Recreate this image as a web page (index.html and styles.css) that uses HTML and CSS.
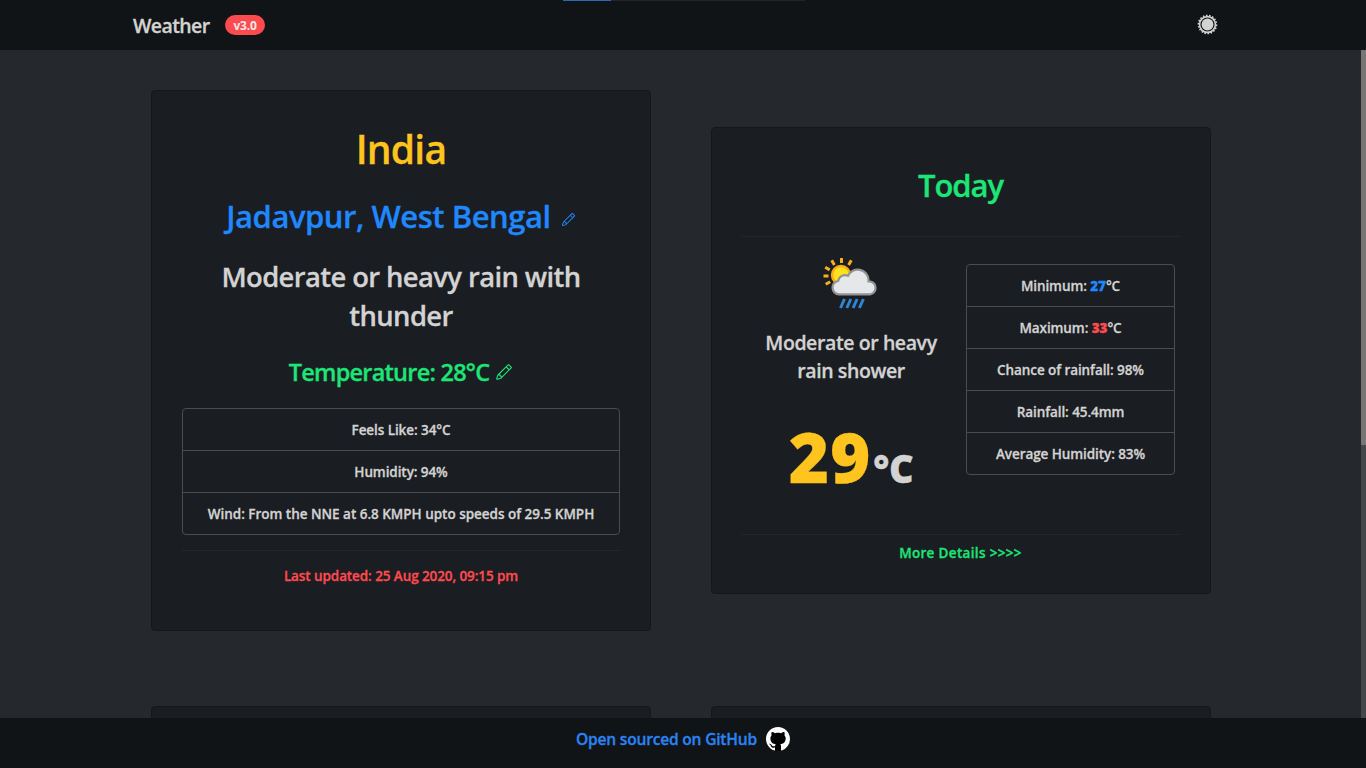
FILE: index.html
```html
<!DOCTYPE html>
<html lang="en">
<head>
<meta charset="utf-8">
<title>Weather</title>
<link rel="stylesheet" href="styles.css">
</head>
<body>
<div class="app">
  <header class="navbar">
    <div class="brand"><span class="brand-name">Weather</span><span class="badge">v3.0</span></div>
    <svg class="sun" viewBox="0 0 22 22" aria-label="Theme">
      <circle cx="11" cy="11" r="6.200" fill="currentColor"/>
      <circle cx="11" cy="11" r="8.300" fill="none" stroke="currentColor" stroke-width="1.700"/>
      <circle cx="11" cy="11" r="9.500" fill="none" stroke="currentColor" stroke-width="1.600" pathLength="36" stroke-dasharray="1 1"/>
    </svg>
    <div class="loader"><div class="loader-bar"></div></div>
  </header>

  <main class="content">
    <div class="cards">
      <section class="card current">
        <h1 class="country">India</h1>
        <h2 class="place"><span class="place-name">Jadavpur, West Bengal</span>
          <svg class="pencil pencil-sm" viewBox="0 0 16 16" fill="currentColor" fill-rule="evenodd"><path d="M11.293 1.293a1 1 0 0 1 1.414 0l2 2a1 1 0 0 1 0 1.414l-9 9a1 1 0 0 1-.39.242l-3 1a1 1 0 0 1-1.266-1.265l1-3a1 1 0 0 1 .242-.391l9-9zM12 2l2 2-9 9-3 1 1-3 9-9z"/><path d="M12.146 6.354l-2.5-2.5.708-.708 2.5 2.5-.707.708zM3 10v.5a.5.5 0 0 0 .5.5H4v.5a.5.5 0 0 0 .5.5H5v.5a.5.5 0 0 0 .5.5H6v-1.5a.5.5 0 0 0-.5-.5H5v-.5a.5.5 0 0 0-.5-.5H3z"/></svg></h2>
        <h3 class="condition">Moderate or heavy rain with<br>thunder</h3>
        <h4 class="temp"><span>Temperature: 28°C</span>
          <svg class="pencil" viewBox="0 0 16 16" fill="currentColor" fill-rule="evenodd"><path d="M11.293 1.293a1 1 0 0 1 1.414 0l2 2a1 1 0 0 1 0 1.414l-9 9a1 1 0 0 1-.39.242l-3 1a1 1 0 0 1-1.266-1.265l1-3a1 1 0 0 1 .242-.391l9-9zM12 2l2 2-9 9-3 1 1-3 9-9z"/><path d="M12.146 6.354l-2.5-2.5.708-.708 2.5 2.5-.707.708zM3 10v.5a.5.5 0 0 0 .5.5H4v.5a.5.5 0 0 0 .5.5H5v.5a.5.5 0 0 0 .5.5H6v-1.5a.5.5 0 0 0-.5-.5H5v-.5a.5.5 0 0 0-.5-.5H3z"/></svg></h4>
        <ul class="list">
          <li>Feels Like: 34°C</li>
          <li>Humidity: 94%</li>
          <li class="wind">Wind: From the NNE at 6.8 KMPH upto speeds of 29.5 KMPH</li>
        </ul>
        <hr class="rule">
        <p class="updated">Last updated: 25 Aug 2020, 09:15 pm</p>
      </section>

      <section class="card today">
        <h2 class="today-title">Today</h2>
        <hr class="rule">
        <div class="today-body">
          <div class="summary">
            <svg class="weather-icon" viewBox="0 0 56 52">
              <g stroke="#f9ae1b" stroke-width="3">
                <path d="M18.5 1v5M8.700 3.300l2.700 4.600M28.300 3.300l-2.700 4.600M2.200 10.200l4.500 2.700M.5 19h5M2.700 27.300l4.500-2.600"/>
              </g>
              <circle cx="18" cy="18" r="9" fill="#ffe21a" stroke="#fbab18" stroke-width="2.400"/>
              <path d="M16 37.300a6.800 6.800 0 0 1-.8-13.500A7 7 0 0 1 25 18.700a10.800 10.800 0 0 1 20.500 4.100v1.500A6.600 6.600 0 0 1 47.500 37.300z" fill="#e6e7e9" stroke="#929497" stroke-width="2.200"/>
              <path d="M21.500 42l-4 9M27.800 42l-4 9M34.100 42l-4 9M40.400 42l-4 9" stroke="#3085d0" stroke-width="3"/>
            </svg>
            <h5 class="summary-text">Moderate or heavy<br>rain shower</h5>
            <div class="degrees"><span class="degrees-num">29</span><span class="degrees-unit">°C</span></div>
          </div>
          <ul class="list stats">
            <li>Minimum: <b class="blue">27</b>°C</li>
            <li>Maximum: <b class="red">33</b>°C</li>
            <li>Chance of rainfall: 98%</li>
            <li>Rainfall: 45.4mm</li>
            <li>Average Humidity: 83%</li>
          </ul>
        </div>
        <hr class="rule">
        <a class="more">More Details &gt;&gt;&gt;&gt;</a>
      </section>

      <section class="card next"></section>
      <section class="card next"></section>
    </div>
    <div class="scrollbar"><div class="thumb"></div></div>
  </main>

  <footer class="footer">
    <a class="source">Open sourced on GitHub</a>
    <svg class="github" viewBox="0 0 16 16"><circle cx="8" cy="8" r="7.700" fill="#000"/><path fill="#fff" fill-rule="evenodd" d="M8 0C3.580 0 0 3.580 0 8c0 3.540 2.290 6.530 5.470 7.590.4.070.55-.17.55-.38 0-.19-.01-.82-.01-1.490-2.010.37-2.530-.49-2.690-.94-.09-.23-.48-.94-.82-1.130-.28-.15-.68-.52-.01-.53.63-.01 1.080.58 1.230.82.72 1.210 1.870.87 2.330.66.07-.52.28-.87.51-1.070-1.780-.2-3.640-.89-3.640-3.950 0-.87.31-1.590.82-2.150-.08-.2-.36-1.020.08-2.120 0 0 .67-.21 2.200.82.64-.18 1.320-.27 2-.27s1.360.09 2 .27c1.530-1.040 2.200-.82 2.200-.82.44 1.100.16 1.920.08 2.120.51.56.82 1.270.82 2.150 0 3.070-1.870 3.750-3.650 3.950.29.25.54.73.54 1.480 0 1.070-.01 1.930-.01 2.200 0 .21.15.46.55.38A8.010 8.010 0 0 0 16 8c0-4.420-3.580-8-8-8z"/></svg>
  </footer>
</div>
</body>
</html>
```
FILE: styles.css
```css
* { box-sizing: border-box; }
body {
  margin: 0;
  background: #25282d;
  color: #d3d3d3;
  font-family: "Open Sans", "Noto Sans", sans-serif;
  font-weight: 600;
  -webkit-text-stroke: .3px currentColor;
  overflow: hidden;
}
h1, h2, h3, h4, h5, p, ul { margin: 0; padding: 0; font-weight: 600; }

.app { display: flex; flex-direction: column; height: 768px; }

.navbar {
  position: relative;
  display: flex;
  align-items: center;
  justify-content: space-between;
  flex: none;
  height: 50px;
  padding: 0 148px 0 133px;
  background: #111416;
}
.brand { display: flex; align-items: center; gap: 15px; }
.brand-name { width: 77px; padding-top: 2px; font-size: 19.5px; letter-spacing: -.6px; line-height: 30px; white-space: nowrap; }
.badge {
  width: 40px;
  height: 20px;
  border-radius: 10px;
  background: #ff4b50;
  color: #f4e6e6;
  font-size: 12px;
  font-weight: 700;
  letter-spacing: -.2px;
  line-height: 21px;
  text-align: center;
  -webkit-text-stroke: 0;
}
.sun { width: 21px; height: 21px; margin: -1px 0 0 0; color: #d3d3d3; }
.loader { position: absolute; top: 0; left: 563px; width: 242px; height: 1px; background: #212529; }
.loader-bar { width: 48px; height: 1px; background: #2b6cab; }

.content { display: flex; flex: 1; min-height: 0; overflow: hidden; }
.cards {
  display: grid;
  grid-template-columns: 500px 500px;
  grid-template-rows: 541px 60px;
  column-gap: 60px;
  row-gap: 75px;
  align-items: center;
  flex: 1;
  padding: 40px 0 0 151px;
}
.scrollbar { width: 5px; height: 668px; background: #45484b; }
.thumb { height: 395px; background: #777675; }

.card {
  padding: 0 30px;
  border: 1px solid #15181b;
  border-radius: 4px;
  background: #1a1d21;
  text-align: center;
}
.current { height: 541px; padding-top: 34px; }
.today { height: 467px; padding: 37px 30px 0 29px; }
.next { height: 60px; }

.country { color: #ffc41d; font-size: 39px; letter-spacing: -.8px; line-height: 48px; }
.place { display: flex; justify-content: center; gap: 10px; margin-top: 24px; color: #1f87ff; font-size: 31px; letter-spacing: -.47px; line-height: 38px; white-space: nowrap; }
.pencil { flex: none; width: 18px; height: 18px; margin-top: 5px; }
.pencil-sm { width: 15px; height: 15px; margin-top: 15px; }
.condition { margin-top: 22px; font-size: 27.4px; letter-spacing: -.6px; line-height: 39px; white-space: nowrap; }
.temp { display: flex; justify-content: center; gap: 6px; margin-top: 23px; color: #1de577; font-size: 23.5px; letter-spacing: -.76px; line-height: 29px; white-space: nowrap; }

.list {
  list-style: none;
  border: 1px solid #4a4d50;
  border-radius: 4px;
  font-size: 13.5px;
  letter-spacing: -.08px;
}
.list li { height: 42px; line-height: 42px; white-space: nowrap; border-bottom: 1px solid #4a4d50; }
.list li:last-child { height: 41px; border-bottom: 0; }
.list .wind { letter-spacing: -.02px; }
.current .list { margin-top: 21px; }
.rule { margin: 0; border: 0; border-top: 1px solid #24272a; }
.current .rule { margin-top: 15px; }
.updated { margin-top: 15px; color: #ff4b50; font-size: 13.5px; letter-spacing: -.09px; line-height: 20px; }

.today-title { color: #1de577; font-size: 31px; letter-spacing: -1.1px; line-height: 40px; }
.today .rule { margin-top: 31px; }
.today-body { display: flex; height: 267px; padding: 20px 5px 0 0; }
.summary { width: 220px; flex: none; }
.weather-icon { display: block; width: 56px; height: 52px; margin: 0 auto 20px; }
.summary-text { font-size: 19.5px; letter-spacing: -.4px; line-height: 28px; white-space: nowrap; }
.degrees { display: flex; justify-content: center; align-items: baseline; gap: 2px; margin-top: 23px; height: 96px; font-weight: 800; }
.degrees-num { color: #ffc41d; font-size: 69px; letter-spacing: .8px; line-height: 96px; }
.degrees-unit { font-size: 38px; letter-spacing: -.4px; line-height: 50px; }
.stats { width: 209px; height: 211px; margin: 7px 0 0 5px; }
.blue { color: #1f87ff; font-weight: 800; }
.red { color: #ff4b50; font-weight: 800; }
.today .today-body + .rule { margin-top: 30px; }
.more { display: block; margin-top: 8px; color: #1de577; font-size: 13.5px; letter-spacing: .33px; line-height: 20px; }

.footer { display: flex; flex: none; align-items: center; justify-content: center; gap: 9px; height: 50px; padding-bottom: 8px; background: #111416; }
.source { color: #2a83f3; font-size: 15.6px; letter-spacing: -.22px; line-height: 24px; white-space: nowrap; }
.github { width: 24px; height: 24px; }
```
